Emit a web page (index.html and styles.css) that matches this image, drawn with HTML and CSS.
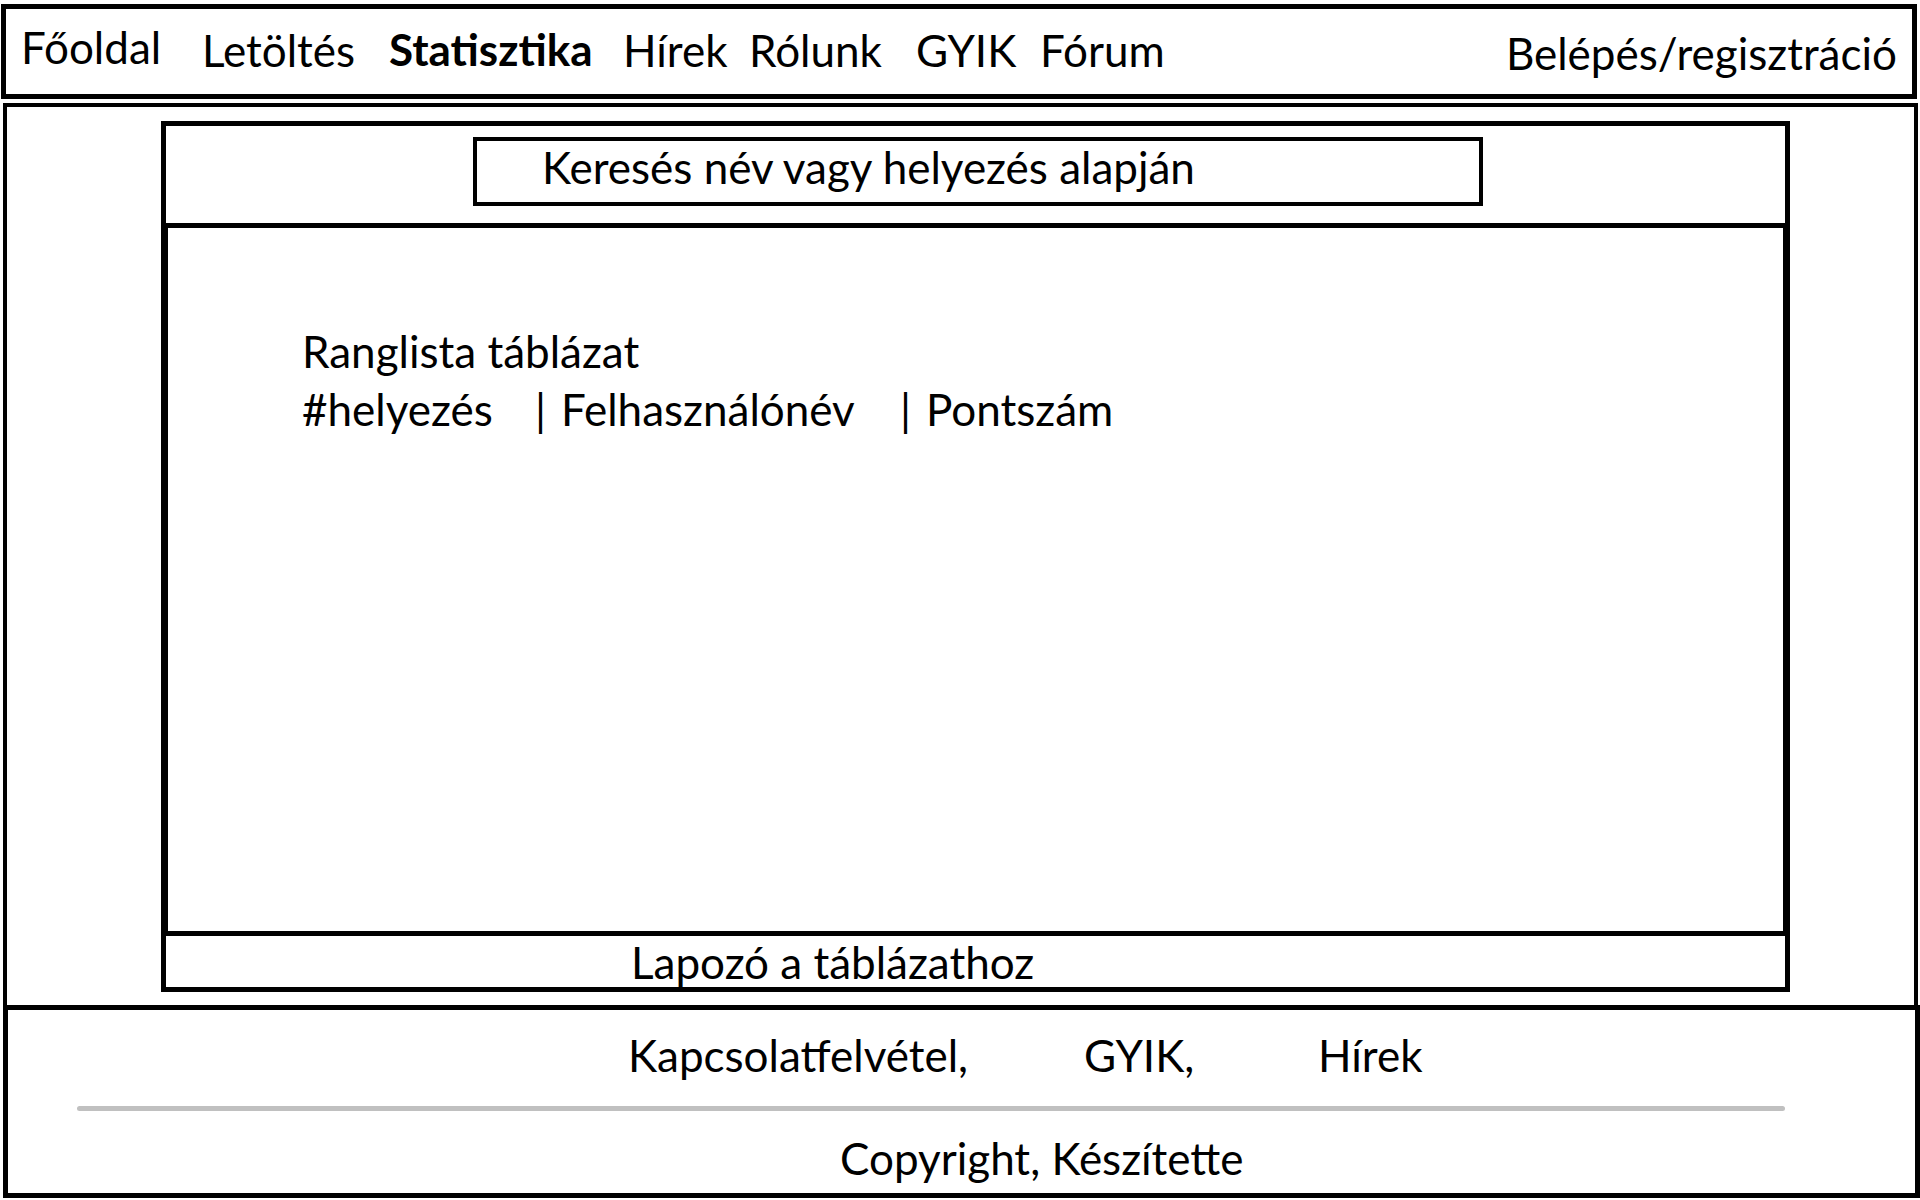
FILE: index.html
```html
<!DOCTYPE html>
<html lang="hu">
<head>
<meta charset="utf-8">
<title>Statisztika</title>
<link rel="stylesheet" href="styles.css">
</head>
<body>
  <header class="topbar">
    <nav class="nav">
      <a class="nav-item nav-home">Főoldal</a>
      <a class="nav-item nav-dl">Letöltés</a>
      <a class="nav-item nav-stat active">Statisztika</a>
      <a class="nav-item nav-news">Hírek</a>
      <a class="nav-item nav-about">Rólunk</a>
      <a class="nav-item nav-faq">GYIK</a>
      <a class="nav-item nav-forum">Fórum</a>
    </nav>
    <a class="login">Belépés/regisztráció</a>
  </header>

  <main class="page">
    <section class="board">
      <div class="search-row">
        <div class="search">Keresés név vagy helyezés alapján</div>
      </div>
      <div class="table-area">
        <p class="table-title">Ranglista táblázat</p>
        <p class="table-cols">
          <span class="col col-rank">#helyezés</span>
          <span class="col col-user"><span class="pipe">|</span>Felhasználónév</span>
          <span class="col col-score"><span class="pipe">|</span>Pontszám</span>
        </p>
      </div>
      <div class="pager">Lapozó a táblázathoz</div>
    </section>
  </main>

  <footer class="footer">
    <div class="footer-links">
      <a class="flink flink-contact">Kapcsolatfelvétel,</a>
      <a class="flink flink-faq">GYIK,</a>
      <a class="flink flink-news">Hírek</a>
    </div>
    <div class="footer-rule"></div>
    <div class="copyright">Copyright, Készítette</div>
  </footer>
</body>
</html>
```

FILE: styles.css
```css
* {
  box-sizing: border-box;
}

html, body {
  margin: 0;
  padding: 0;
  background: #fff;
}

body {
  width: 1920px;
  height: 1200px;
  overflow: hidden;
  font-family: Lato, "Open Sans", "Liberation Sans", sans-serif;
  font-size: 44px;
  line-height: 54px;
  color: #000;
}

a {
  color: inherit;
  text-decoration: none;
}

p {
  margin: 0;
}

/* ---------- header ---------- */
.topbar {
  margin: 4px 3px 0 1px;
  height: 95px;
  border: 5px solid #000;
  display: flex;
  justify-content: space-between;
  align-items: flex-start;
  padding: 0 15px;
}

.nav {
  display: flex;
  align-items: flex-start;
}

.nav-item {
  display: block;
  margin-top: 14px;
  white-space: nowrap;
}

.nav-home  { width: 181px; margin-top: 11px; }
.nav-dl    { width: 187px; }
.nav-stat  { width: 234px; margin-top: 13px; }
.nav-news  { width: 126px; }
.nav-about { width: 167px; }
.nav-faq   { width: 124px; }
.nav-forum { width: auto; }

.active {
  font-weight: 700;
}

.login {
  display: block;
  margin-top: 17px;
  white-space: nowrap;
}

/* ---------- main ---------- */
.page {
  margin: 4px 2px 0 3px;
  height: 902px;
  border: 4px solid #000;
  border-bottom: none;
  padding: 14px 0 0 154px;
}

.board {
  width: 1629px;
  display: flex;
  flex-direction: column;
}

.search-row {
  height: 107px;
  border: 5px solid #000;
  padding: 11px 0 0 307px;
}

.search {
  width: 1010px;
  height: 69px;
  border: 4px solid #000;
  padding-left: 65px;
  line-height: 53px;
  white-space: nowrap;
}

.table-area {
  height: 708px;
  border: 7px solid #000;
  border-top: none;
  border-bottom-width: 5px;
  padding: 94px 0 0 134px;
  line-height: 58px;
}

.table-cols {
  display: flex;
  white-space: nowrap;
}

.col-rank  { width: 233px; }
.col-user  { width: 365px; }

.pipe {
  margin-right: 15px;
}

.pager {
  height: 56px;
  border: 5px solid #000;
  border-top: none;
  padding-left: 465px;
  line-height: 52px;
  white-space: nowrap;
}

/* ---------- footer ---------- */
.footer {
  margin: 0 0 0 3px;
  height: 193px;
  border: 5px solid #000;
}

.footer-links {
  display: flex;
  padding: 18px 0 0 620px;
  white-space: nowrap;
}

.flink-contact { width: 456px; }
.flink-faq     { width: 234px; }

.footer-rule {
  margin: 24px 0 0 69px;
  width: 1708px;
  height: 5px;
  background: #c0c0c0;
  border-radius: 3px;
}

.copyright {
  margin-top: 20px;
  padding-left: 832px;
  white-space: nowrap;
}
```
